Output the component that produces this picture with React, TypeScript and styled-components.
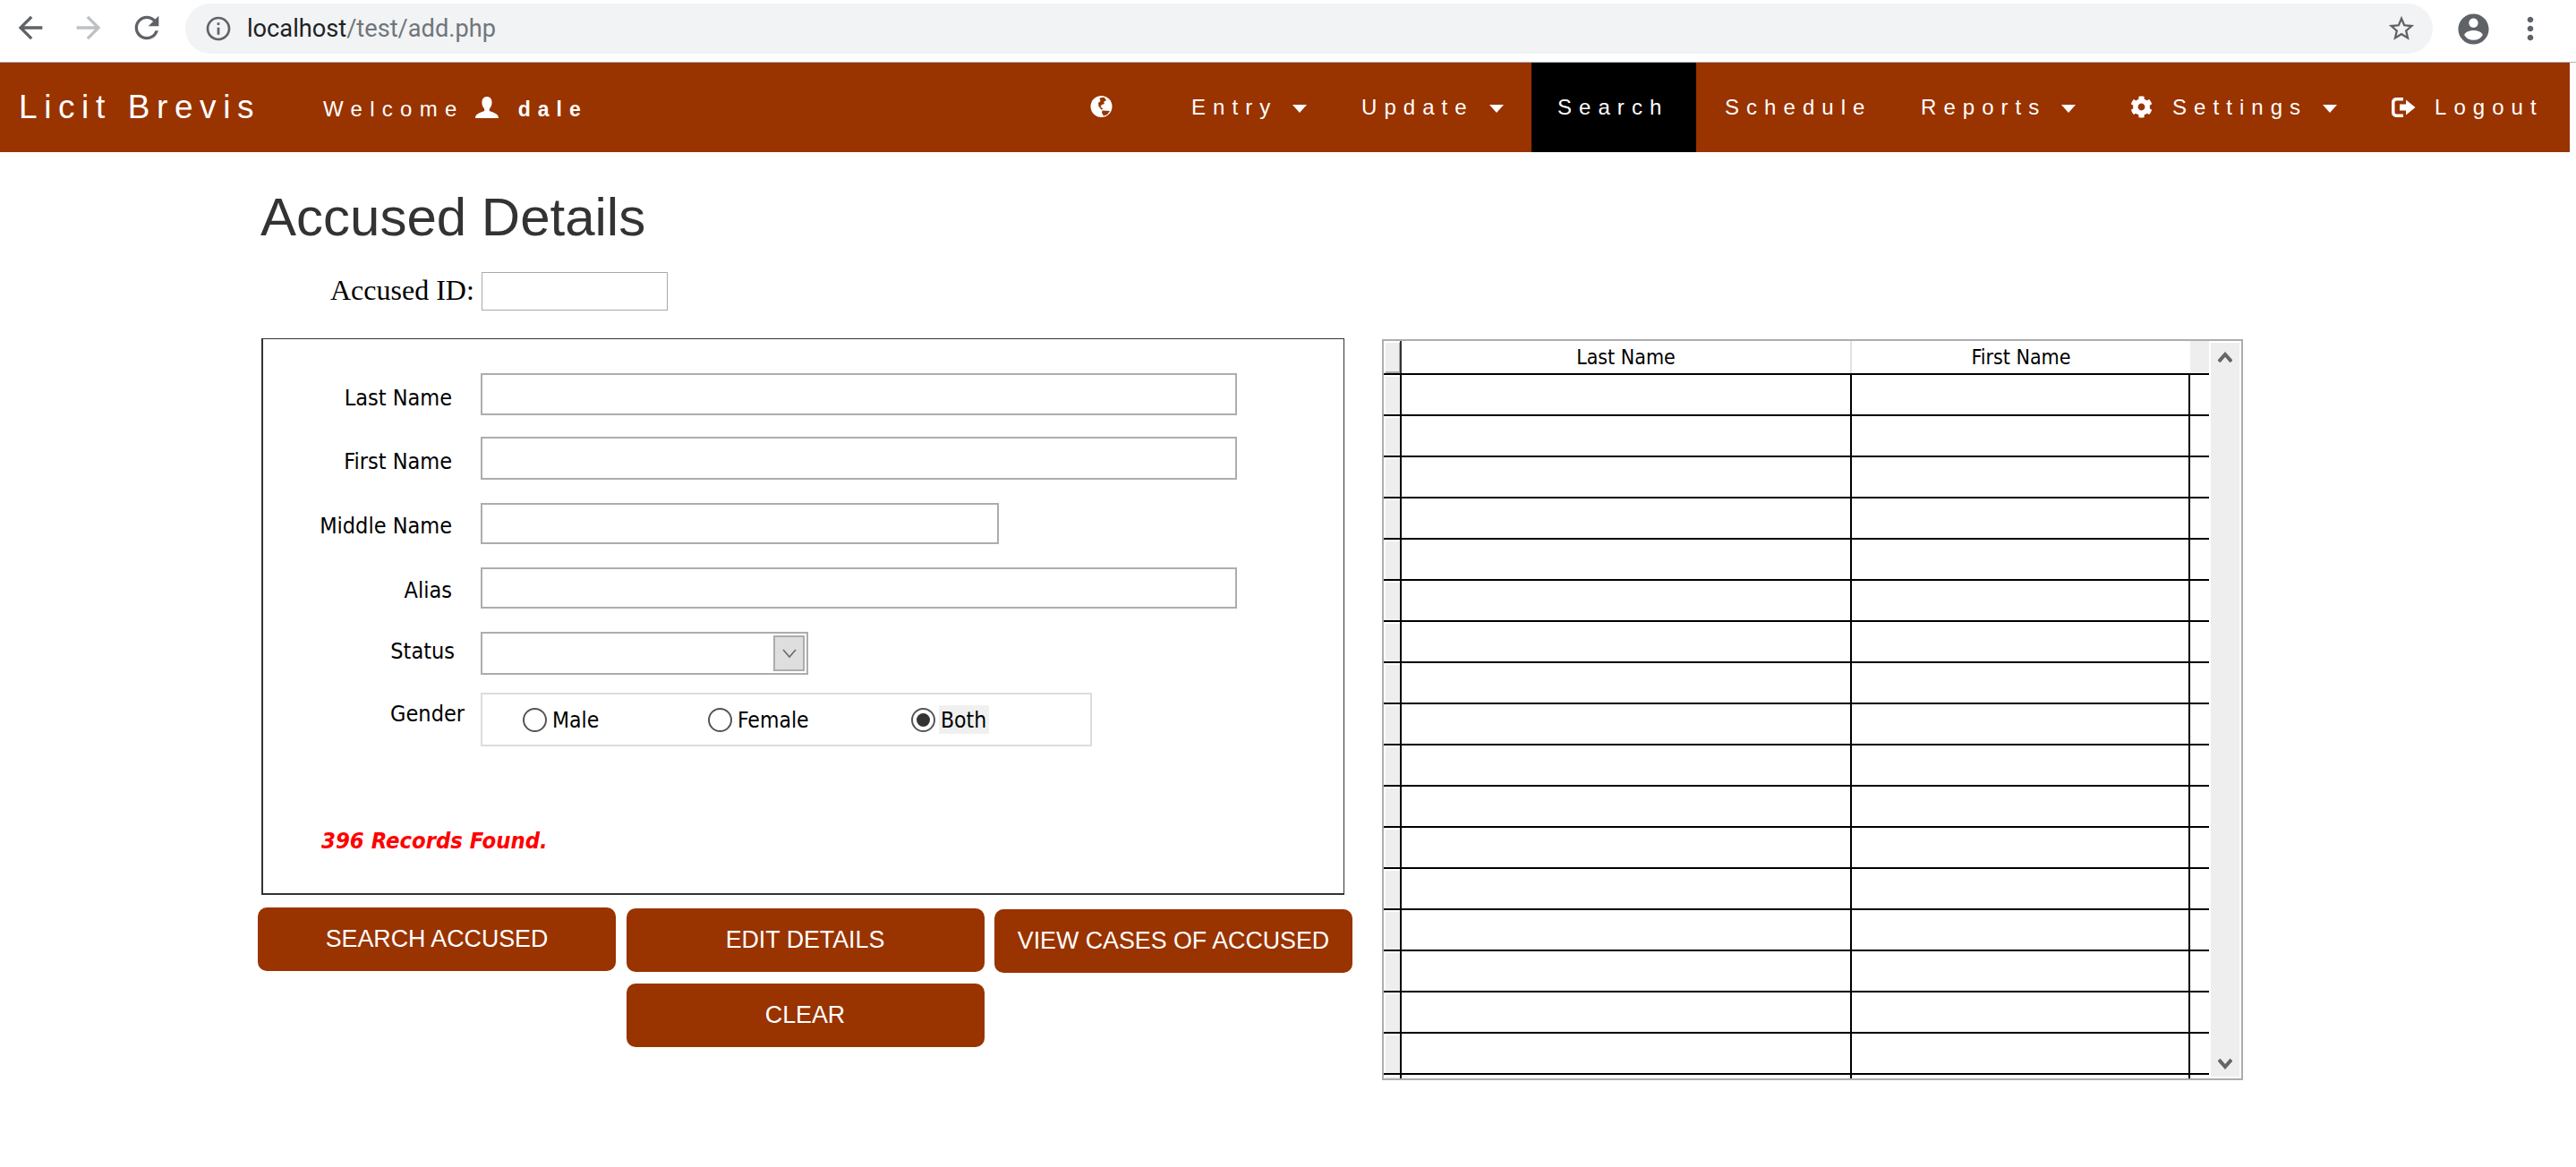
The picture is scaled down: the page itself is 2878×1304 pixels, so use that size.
import React from "react";
import styled, { createGlobalStyle } from "styled-components";
import { FaCog } from "react-icons/fa";

const Global = createGlobalStyle`
  html, body { margin: 0; padding: 0; background: #fff; }
  * { box-sizing: border-box; }
`;

const Toolbar = styled.div`
  display: flex; align-items: flex-start; height: 70px; padding: 4px 0 0 14px;
  background: #fff; border-bottom: 1px solid #b4b6ba; width: 2878px;
`;
const NavIcon = styled.svg<{ $size?: number; $color?: string; $left?: number }>`
  flex: none; width: ${p => p.$size ?? 40}px; height: ${p => p.$size ?? 40}px;
  margin-left: ${p => p.$left ?? 0}px; fill: ${p => p.$color ?? "#5f6368"};
`;
const ToolIcons = styled.div`
  display: flex; gap: 25px; padding-top: 7px;
`;
const WindowIcons = styled(ToolIcons)`
  gap: 0; padding-top: 8px;
`;
const AddressBar = styled.div`
  display: flex; align-items: center; width: 2511px; height: 56px; margin-left: 23px;
  padding: 0 18px 0 21px; border-radius: 28px; background: #f1f3f4;
`;
const UrlText = styled.div`
  margin-left: 16px; font: 27.2px Roboto, sans-serif; color: #70757a; flex: 1;
`;
const UrlHost = styled.span` color: #202124; `;
const Nav = styled.div`
  display: flex; align-items: stretch; width: 2871px; height: 100px; background: #993300;
  color: #fff; font-family: "Liberation Sans", Arial, sans-serif;
`;
const Brand = styled.div`
  padding: 30px 0 0 21px; font-size: 37px; letter-spacing: 7.6px; width: 361px; line-height: 40px;
  white-space: nowrap;
`;
const Welcome = styled.div`
  display: flex; align-items: center; align-self: flex-start; margin-top: 38px;
  font-size: 24px; letter-spacing: 8.3px; line-height: 28px; white-space: nowrap;
`;
const UserIcon = styled.svg`
  flex: none; width: 26px; height: 24px; margin: 0 0 4px 12px; fill: #fff;
`;
const UserName = styled.b` letter-spacing: 8px; font-size: 23px; margin-left: 22px; `;
const NavRight = styled.div` display: flex; margin-left: auto; `;
const NavItem = styled.div<{ $active?: boolean; $width?: number; $pad?: number }>`
  display: flex; align-items: center; padding: 0 0 1px ${p => p.$pad ?? 29}px; font-size: 24px; letter-spacing: 8.05px;
  width: ${p => p.$width}px; white-space: nowrap;
  background: ${p => (p.$active ? "#000" : "transparent")};
`;
const Caret = styled.span`
  width: 0; height: 0; margin-left: 17px; margin-top: 4px;
  border-left: 8px solid transparent; border-right: 8px solid transparent; border-top: 9px solid #fff;
`;
const GlobeSlot = styled.div`
  width: 84px; display: flex; padding: 37px 0 0 0;
`;
const GlobeIcon = styled.svg` width: 25px; height: 24px; `;
const IconGap = styled.span<{ $w: number }>`
  display: inline-flex; margin-right: ${p => p.$w}px;
`;

const Main = styled.div` display: flex; align-items: flex-start; padding-left: 288px; `;
const LeftColumn = styled.div` width: 1223px; flex: none; `;
const Heading = styled.h1`
  margin: 38px 0 0 3px; font: 400 60px/70px "Liberation Sans", Arial, sans-serif; color: #333;
`;
const IdRow = styled.div`
  display: flex; align-items: center; margin: 24px 0 0 81px; height: 44px;
  font: 32px "Liberation Serif", "Times New Roman", serif; color: #000;
`;
const IdInput = styled.div`
  width: 208px; height: 43px; margin: 2px 0 0 8px; border: 1px solid #aaa; align-self: flex-start;
`;
const Panel = styled.div`
  width: 1210px; height: 622px; margin: 32px 0 0 4px; padding-top: 38px;
  border: solid #333; border-width: 1px 1px 2px 2px;
  font-family: "DejaVu Sans Condensed", "DejaVu Sans", sans-serif;
  font-stretch: condensed; font-size: 25px; color: #000;
`;
const FormRow = styled.div<{ $gap: number }>`
  display: flex; margin-top: ${p => p.$gap}px;
`;
const FieldLabel = styled.div<{ $drop: number; $width?: number }>`
  flex: none; width: ${p => p.$width ?? 211}px; padding-top: ${p => p.$drop}px; text-align: right;
  line-height: 26px; white-space: nowrap;
`;
const TextBox = styled.div<{ $w: number; $h: number; $left?: number }>`
  width: ${p => p.$w}px; height: ${p => p.$h}px; margin-left: ${p => p.$left ?? 32}px;
  border: 2px solid #adadb0;
`;
const SelectBox = styled(TextBox)`
  display: flex; justify-content: flex-end; padding: 2px;
`;
const SelectButton = styled.div`
  display: flex; align-items: center; justify-content: center; width: 35px; height: 40px;
  background: #dedede; border: 2px solid #adadb0;
`;
const RadioGroup = styled.div`
  display: flex; align-items: center; width: 683px; height: 60px; margin-left: 18px;
  border: 2px solid #dcdcdc; padding-left: 45px;
`;
const RadioItem = styled.div<{ $w: number }>`
  display: flex; align-items: center; width: ${p => p.$w}px;
`;
const RadioDot = styled.span<{ $on?: boolean }>`
  position: relative; display: block; flex: none; width: 27px; height: 27px; border-radius: 50%;
  border: 2px solid #555; background: #fff;
  &::after {
    content: ""; display: ${p => (p.$on ? "block" : "none")}; position: absolute; inset: 4px;
    border-radius: 50%; background: #333;
  }
`;
const RadioText = styled.span<{ $on?: boolean }>`
  margin-left: 4px; line-height: 30px; padding: 2px 3px 0 2px; font-size: 24.5px;
  background: ${p => (p.$on ? "#f0f0f0" : "transparent")};
`;
const Records = styled.div`
  margin: 92px 0 0 65px; color: #ff0000; font-weight: 700; font-style: italic; font-size: 25.4px; line-height: 26px;
`;
const ButtonGrid = styled.div`
  display: grid; grid-template-columns: repeat(3, 400px); column-gap: 11.5px; row-gap: 12px; margin-top: 14px;
`;
const ActionButton = styled.div<{ $col?: number; $drop?: number }>`
  display: flex; align-items: center; justify-content: center; height: 71px; border-radius: 10px;
  background: #993300; color: #fff; font: 26.8px "Liberation Sans", Arial, sans-serif;
  margin-top: ${p => p.$drop ?? 0}px; ${p => (p.$col ? `grid-column: ${p.$col};` : "")}
`;

const GridFrame = styled.div`
  display: flex; flex: none; width: 962px; height: 828px; margin: 209px 0 0 33px;
  border: 2px solid #adadb0; overflow: hidden;
`;
const GridBody = styled.div`
  width: 922px; flex: none; font-family: "DejaVu Sans Condensed", "DejaVu Sans", sans-serif;
  font-stretch: condensed; font-size: 23px; color: #000;
`;
const GridRow = styled.div<{ $h: number; $line?: boolean }>`
  display: flex; height: ${p => p.$h}px; border-bottom: ${p => (p.$line ? "2px solid #000" : "0")};
`;
const RowHead = styled.div`
  width: 20px; flex: none; background: #eee; border-right: 2px solid #000;
  box-shadow: inset 2px 2px 0 #fff;
`;
const HeaderRowHead = styled(RowHead)`
  border-right-color: #333; box-shadow: inset 2px 2px 0 #fff, inset -1px -2px 0 #aaa;
`;
const BodyCell = styled.div<{ $w: number; $plain?: boolean }>`
  width: ${p => p.$w}px; flex: none; border-right: ${p => (p.$plain ? "0" : "2px solid #000")};
`;
const HeadCell = styled.div<{ $w: number; $fill?: boolean; $plain?: boolean }>`
  width: ${p => p.$w}px; flex: none; text-align: center; line-height: 36px;
  background: ${p => (p.$fill ? "#eee" : "#fff")};
  border-right: ${p => (p.$plain ? "0" : "2px solid #e2e2e2")};
`;
const Scrollbar = styled.div`
  display: flex; flex-direction: column; justify-content: space-between; align-items: center;
  width: 32px; height: 820px; margin: 2px 0 0 2px; padding: 10px 0 8px; background: #eee;
`;

const back = "M20 11H7.83l5.59-5.59L12 4l-8 8 8 8 1.41-1.41L7.83 13H20v-2z";
const forward = "M4 11h12.17l-5.59-5.59L12 4l8 8-8 8-1.41-1.41L16.17 13H4v-2z";
const reload = "M17.65 6.35A7.958 7.958 0 0 0 12 4c-4.42 0-7.99 3.58-7.99 8s3.57 8 7.99 8c3.73 0 6.84-2.55 7.73-6h-2.08A5.99 5.99 0 0 1 12 18c-3.31 0-6-2.69-6-6s2.69-6 6-6c1.66 0 3.14.69 4.22 1.78L13 11h7V4l-2.35 2.35z";
const info = "M11 7h2v2h-2zm0 4h2v6h-2zm1-9C6.48 2 2 6.48 2 12s4.48 10 10 10 10-4.48 10-10S17.52 2 12 2zm0 18c-4.41 0-8-3.59-8-8s3.59-8 8-8 8 3.59 8 8-3.59 8-8 8z";
const star = "M22 9.24l-7.19-.62L12 2 9.19 8.63 2 9.24l5.46 4.73L5.82 21 12 17.27 18.18 21l-1.63-7.03L22 9.24zM12 15.4l-3.76 2.27 1-4.28-3.32-2.88 4.38-.38L12 6.1l1.71 4.04 4.38.38-3.32 2.88 1 4.28L12 15.4z";
const account = "M12 2C6.48 2 2 6.48 2 12s4.48 10 10 10 10-4.48 10-10S17.52 2 12 2zm0 3c1.66 0 3 1.34 3 3s-1.34 3-3 3-3-1.34-3-3 1.34-3 3-3zm0 14.2a7.2 7.2 0 0 1-6-3.22c.03-1.99 4-3.08 6-3.08 1.99 0 5.97 1.09 6 3.08a7.2 7.2 0 0 1-6 3.22z";
const dots = "M12 8c1.1 0 2-.9 2-2s-.9-2-2-2-2 .9-2 2 .9 2 2 2zm0 2c-1.1 0-2 .9-2 2s.9 2 2 2 2-.9 2-2-.9-2-2-2zm0 6c-1.1 0-2 .9-2 2s.9 2 2 2 2-.9 2-2-.9-2-2-2z";

const Mat = ({ d, size, color, left }: { d: string; size?: number; color?: string; left?: number }) => (
  <NavIcon viewBox="0 0 24 24" $size={size} $color={color} $left={left}><path d={d} /></NavIcon>
);

const rows = Array.from({ length: 17 });

export default function App() {
  return (
    <>
      <Global />
      <Toolbar>
        <ToolIcons>
          <Mat d={back} />
          <Mat d={forward} color="#bdc1c6" />
          <Mat d={reload} />
        </ToolIcons>
        <AddressBar>
          <Mat d={info} size={32} />
          <UrlText><UrlHost>localhost</UrlHost>/test/add.php</UrlText>
          <Mat d={star} size={34} />
        </AddressBar>
        <WindowIcons>
          <Mat d={account} size={41} left={25} />
          <Mat d={dots} size={40} left={23} />
        </WindowIcons>
      </Toolbar>
      <Nav>
        <Brand>Licit Brevis</Brand>
        <Welcome>
          Welcome
          <UserIcon viewBox="0 0 26 24">
            <path d="M13 0c4 0 5.600 3 5.600 6.500 0 3.600-1.700 6-2.800 7.200v2.400c3 1.200 10.200 2.600 10.200 7.900H0c0-5.300 7.200-6.700 10.200-7.900v-2.400C9.100 12.500 7.400 10.100 7.400 6.500 7.400 3 9 0 13 0z" />
          </UserIcon>
          <UserName>dale</UserName>
        </Welcome>
        <NavRight>
          <GlobeSlot>
            <GlobeIcon viewBox="0 0 24 24">
              <circle cx="12" cy="12" r="12" fill="#fff" />
              <path fill="#993300" d="M10 2.500 15 1.800 17.500 5 14.500 7 15.500 9 12.500 10 11 12 14 15 12 15.500 9 12 8.500 8 11 6z" />
              <path fill="#993300" d="M13 16.500 21.500 17 18.500 21 14.500 22.500 12.500 19z" />
            </GlobeIcon>
          </GlobeSlot>
          <NavItem $width={190}>Entry<Caret /></NavItem>
          <NavItem $width={219}>Update<Caret /></NavItem>
          <NavItem $active $width={184}>Search</NavItem>
          <NavItem $width={222} $pad={32}>Schedule</NavItem>
          <NavItem $width={234}>Reports<Caret /></NavItem>
          <NavItem $width={292}>
            <IconGap $w={22}><FaCog size={25} /></IconGap>Settings<Caret />
          </NavItem>
          <NavItem $width={228}>
            <IconGap $w={21}>
              <svg width="27" height="22" viewBox="0 0 27 22" fill="#fff">
                <path d="M5 0h8v3.500H5.500a2 2 0 0 0-2 2v11a2 2 0 0 0 2 2H13V22H5a5 5 0 0 1-5-5V5a5 5 0 0 1 5-5z" />
                <path d="M9 7.500h7V2.500l10.500 8.500L16 19.500v-5H9z" />
              </svg>
            </IconGap>
            Logout
          </NavItem>
        </NavRight>
      </Nav>
      <Main>
        <LeftColumn>
          <Heading>Accused Details</Heading>
          <IdRow>Accused ID:<IdInput /></IdRow>
          <Panel>
            <FormRow $gap={0}><FieldLabel $drop={15}>Last Name</FieldLabel><TextBox $w={845} $h={47} /></FormRow>
            <FormRow $gap={24}><FieldLabel $drop={15}>First Name</FieldLabel><TextBox $w={845} $h={48} /></FormRow>
            <FormRow $gap={26}><FieldLabel $drop={13}>Middle Name</FieldLabel><TextBox $w={579} $h={46} /></FormRow>
            <FormRow $gap={26}><FieldLabel $drop={13}>Alias</FieldLabel><TextBox $w={845} $h={46} /></FormRow>
            <FormRow $gap={26}>
              <FieldLabel $drop={9} $width={214}>Status</FieldLabel>
              <SelectBox $w={366} $h={48} $left={29}>
                <SelectButton>
                  <svg width="18" height="12" viewBox="0 0 18 12"><path d="M2 2l7 8 7-8" fill="none" stroke="#666" strokeWidth="1.5" /></svg>
                </SelectButton>
              </SelectBox>
            </FormRow>
            <FormRow $gap={20}>
              <FieldLabel $drop={11} $width={225}>Gender</FieldLabel>
              <RadioGroup>
                <RadioItem $w={207}><RadioDot /><RadioText>Male</RadioText></RadioItem>
                <RadioItem $w={227}><RadioDot /><RadioText>Female</RadioText></RadioItem>
                <RadioItem $w={100}><RadioDot $on /><RadioText $on>Both</RadioText></RadioItem>
              </RadioGroup>
            </FormRow>
            <Records>396 Records Found.</Records>
          </Panel>
          <ButtonGrid>
            <ActionButton>SEARCH ACCUSED</ActionButton>
            <ActionButton $drop={1}>EDIT DETAILS</ActionButton>
            <ActionButton $drop={2}>VIEW CASES OF ACCUSED</ActionButton>
            <ActionButton $col={2}>CLEAR</ActionButton>
          </ButtonGrid>
        </LeftColumn>
        <GridFrame>
          <GridBody>
            <GridRow $h={38} $line>
              <HeaderRowHead />
              <HeadCell $w={503}>Last Name</HeadCell>
              <HeadCell $w={378} $plain>First Name</HeadCell>
              <HeadCell $w={21} $fill $plain />
            </GridRow>
            {rows.map((_, i) => (
              <GridRow key={i} $h={46} $line>
                <RowHead />
                <BodyCell $w={503} />
                <BodyCell $w={378} />
                <BodyCell $w={21} $plain />
              </GridRow>
            ))}
            <GridRow $h={6}>
              <RowHead />
              <BodyCell $w={503} />
              <BodyCell $w={378} />
              <BodyCell $w={21} $plain />
            </GridRow>
          </GridBody>
          <Scrollbar>
            <svg width="16" height="13" viewBox="0 0 16 13"><path d="M1 11l7-8 7 8" fill="none" stroke="#666" strokeWidth="4" /></svg>
            <svg width="16" height="13" viewBox="0 0 16 13"><path d="M1 2l7 8 7-8" fill="none" stroke="#666" strokeWidth="4" /></svg>
          </Scrollbar>
        </GridFrame>
      </Main>
    </>
  );
}
